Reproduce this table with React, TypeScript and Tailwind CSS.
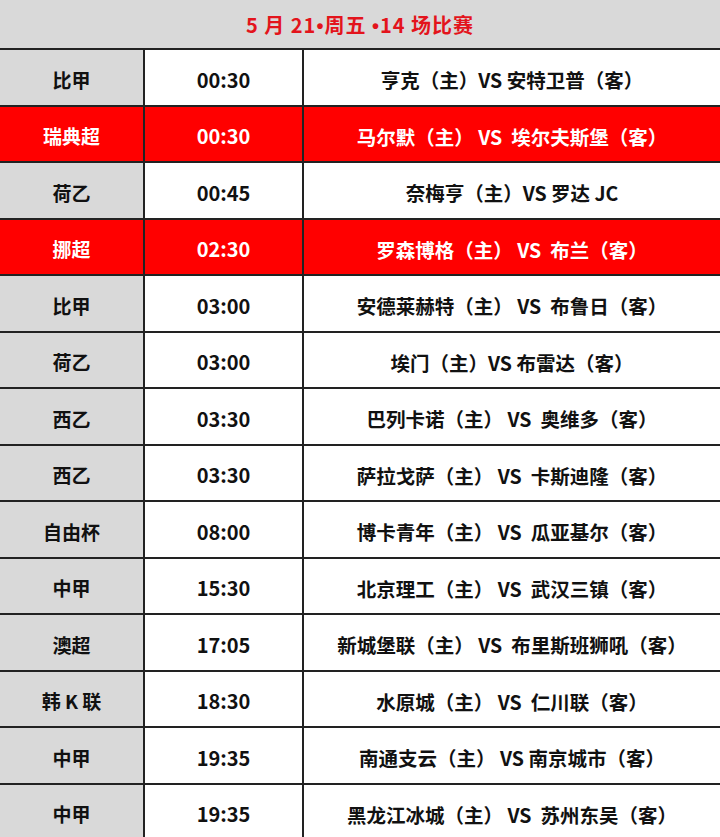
import React from "react";

type Row = { league: string; time: string; match: string; hot?: boolean };

const rows: Row[] = [
  { league: "比甲", time: "00:30", match: "亨克（主）VS 安特卫普（客）" },
  { league: "瑞典超", time: "00:30", match: "马尔默（主） VS  埃尔夫斯堡（客）", hot: true },
  { league: "荷乙", time: "00:45", match: "奈梅亨（主）VS 罗达 JC" },
  { league: "挪超", time: "02:30", match: "罗森博格（主） VS  布兰（客）", hot: true },
  { league: "比甲", time: "03:00", match: "安德莱赫特（主） VS  布鲁日（客）" },
  { league: "荷乙", time: "03:00", match: "埃门（主）VS 布雷达（客）" },
  { league: "西乙", time: "03:30", match: "巴列卡诺（主） VS  奥维多（客）" },
  { league: "西乙", time: "03:30", match: "萨拉戈萨（主） VS  卡斯迪隆（客）" },
  { league: "自由杯", time: "08:00", match: "博卡青年（主） VS  瓜亚基尔（客）" },
  { league: "中甲", time: "15:30", match: "北京理工（主） VS  武汉三镇（客）" },
  { league: "澳超", time: "17:05", match: "新城堡联（主） VS  布里斯班狮吼（客）" },
  { league: "韩 K 联", time: "18:30", match: "水原城（主） VS  仁川联（客）" },
  { league: "中甲", time: "19:35", match: "南通支云（主） VS 南京城市（客）" },
  { league: "中甲", time: "19:35", match: "黑龙江冰城（主） VS  苏州东吴（客）" },
];

const font = { fontFamily: '"Noto Sans CJK SC", "Noto Sans", sans-serif' };

function Dot() {
  return <span style={{ fontFamily: '"Liberation Sans", sans-serif' }}>•</span>;
}

export default function App() {
  return (
    <div
      className="w-[720px] h-[837px] overflow-hidden bg-white font-bold text-[19px] text-[#111]"
      style={font}
    >
      <div className="h-[50px] pt-[2px] bg-[#d9d9d9] border-b-2 border-[#222] flex items-center justify-center text-[#e3141c] text-[20px] tracking-[1px] whitespace-pre">
        <span>
          5 月 21<Dot />周五 <Dot />14 场比赛
        </span>
      </div>
      {rows.map((r, i) => (
        <div
          key={i}
          className={`grid grid-cols-[145px_159px_1fr] h-[56.5px] border-b-2 border-[#222] ${
            r.hot ? "bg-[#ff0000] text-white" : ""
          }`}
        >
          <div
            className={`flex items-center justify-center pt-[5px] border-r-2 border-[#222] whitespace-pre ${
              r.hot ? "" : "bg-[#d9d9d9]"
            }`}
          >
            {r.league}
          </div>
          <div className="flex items-center justify-center pt-[5px] border-r-2 border-[#222] text-[20px]">
            {r.time}
          </div>
          <div className="flex items-center justify-center pt-[5px] whitespace-pre text-[19.5px]">
            {r.match}
          </div>
        </div>
      ))}
    </div>
  );
}
